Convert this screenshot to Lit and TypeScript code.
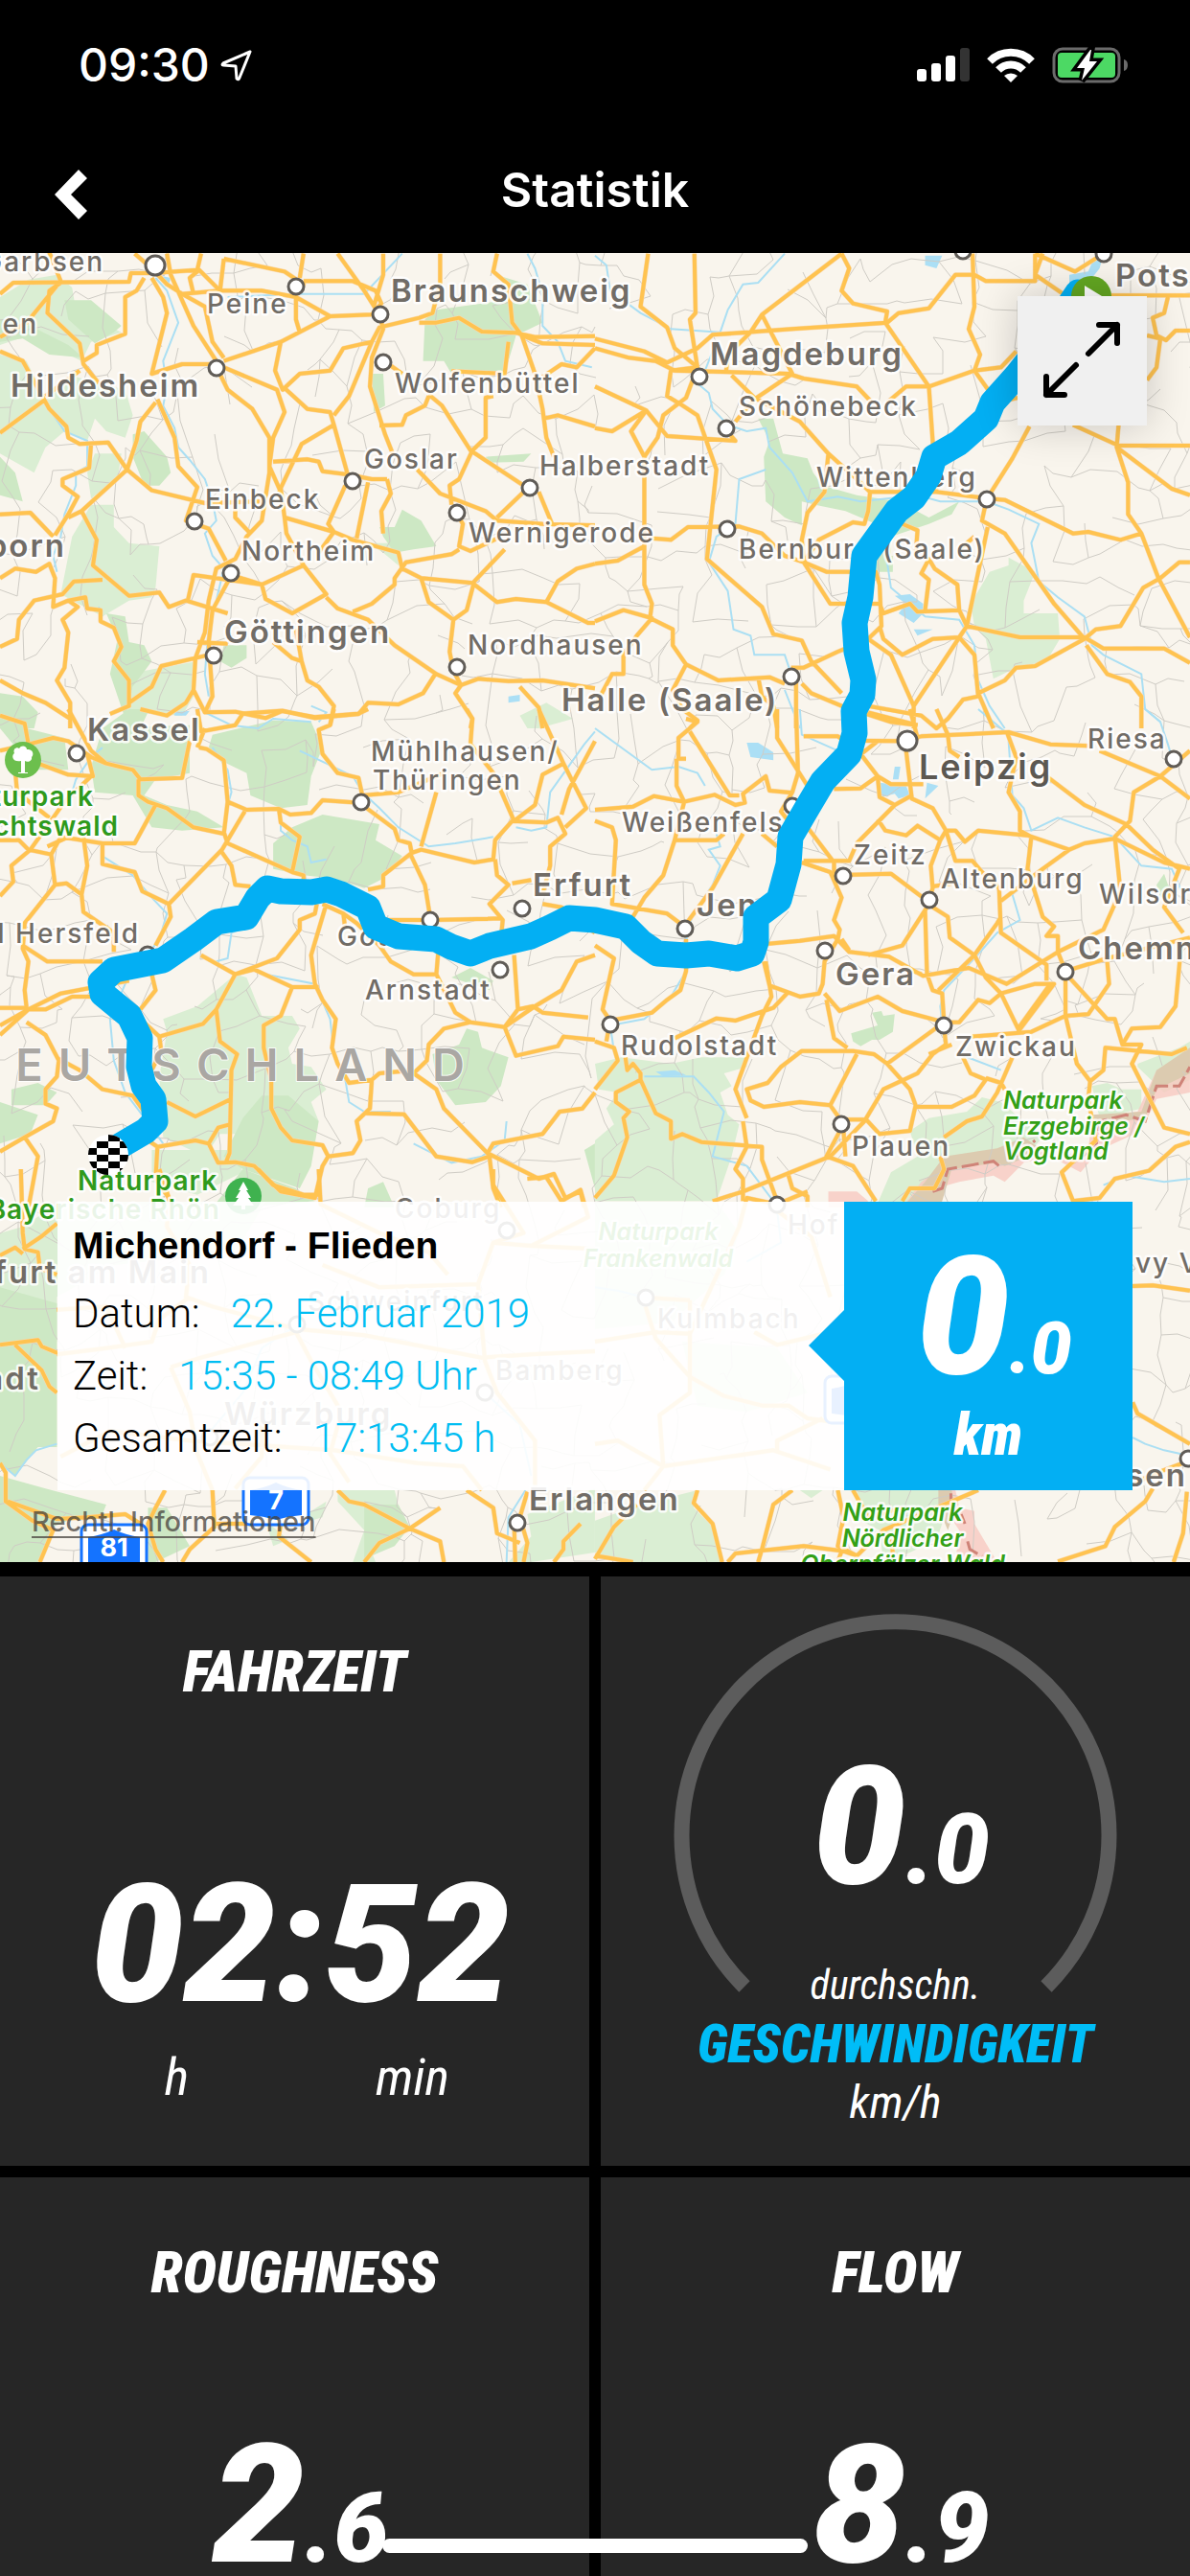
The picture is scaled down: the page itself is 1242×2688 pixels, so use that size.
import { LitElement, html, svg, css } from "lit";
import { customElement, property } from "lit/decorators.js";

type Kind = "town" | "city" | "metro" | "park" | "nature";
interface Label { t: string; x: number; y: number; k: Kind; end?: boolean; mid?: boolean }

/* The map is cut into six tiles, each with its own local grid. */
interface MapTile {
  x: number; y: number;
  light?: string; forest?: string; water?: string; river?: string; roads: string;
  pink?: string; tan?: string; border?: string;
  dots: [number, number, number?][];
}

const TILES: MapTile[] = [
  {
    x: 0, y: 260,
    light: "M75 95L150 80L190 120L200 190L320 260L240 290L215 350L180 330L100 260L0 300V150Z M0 330L70 350L120 470L200 400L330 440L350 520L330 590L280 570L250 530L230 600L170 570L120 620L90 700L0 640Z M250 640L320 640L310 720L240 780L230 700Z M240 800L300 800L300 870L340 920L420 930L410 1060L400 1090L340 1100L270 1150L160 1080L190 900Z M380 1320L520 1290L510 1400L480 1460L330 1450L350 1370Z M1370 1460L1440 1420L1510 1470L1420 1500H1390Z M970 920L1050 920L1050 990L1010 950Z",
    forest: "M170 160L240 160L320 240L300 260L250 295L180 220Z M0 220L80 240L180 300L220 340L130 330L60 280L0 290Z M350 580L380 570L440 650L450 700L420 740L380 740L350 650Z M0 650L40 700L60 790L0 770Z M1150 190L1330 160L1430 230L1360 270L1330 390L1190 390L1170 350L1115 350L1120 220Z M1060 815L1110 850L1150 930L1090 940L1040 950L1010 900L1000 870L1040 870Z M980 390L1010 390L1015 490L985 510Z M280 1140L330 1150L340 1230L380 1240L400 1290L350 1370L330 1470L290 1330L310 1220Z M590 1240L650 1240L650 1280L610 1310L580 1290Z M0 1390L60 1400L100 1450L90 1500H0Z M1320 85L1390 110L1430 230L1350 200Z M1280 650L1400 640L1380 665L1290 668Z",
    water: "M1340 1400L1370 1395L1370 1415L1340 1420Z M430 85L450 90L445 110L430 105Z",
    river: "M410 90L440 130L470 230L450 290L430 350L440 430L430 490L460 560L470 620L500 660L540 720L560 790L570 850L540 890L560 960L590 1000L570 1100L550 1180L540 1330L550 1400 M600 150L780 140L960 140L1060 14 M1390 14L1410 60L1430 140L1430 240L1470 290L1490 350L1560 370 M130 500L170 570L230 600L230 680L200 700L200 740L170 830L160 900L140 960L150 1010 M820 1430L860 1450L840 1480 M260 1120L270 1150",
    roads: "M0 140L35 105L340 102L345 75L400 75L520 65L530 14 M355 14L400 60L440 110L480 140L540 180L560 290L590 340 M400 90L430 150L440 200L400 390L480 360L570 360 M440 14L450 80L510 240L570 350 M130 10L160 100L70 230L0 275 M160 105L130 130L125 200L210 295L220 360L260 420 M380 90L360 130L330 150L330 265L255 300L255 325L220 350 M590 30L750 70L800 110L780 140L780 220L790 260 M590 30L580 130L480 140 M510 140L500 90L525 65L580 130L690 130L780 150L870 210L980 205L1005 170L990 130L930 100L800 100 M800 14L790 90 M890 14L960 130L1000 205L1010 250L980 340L975 430L1015 580L1035 640 M590 350L740 290L870 210 M1010 14L1010 80L985 180 M1160 14L1160 105L1140 200L1105 215L1000 245L980 290L905 310L870 380L790 390L745 440L725 380L740 290 M1105 230L1150 230L1210 215L1270 258L1360 262L1410 275L1568 272 M1310 14L1300 70L1340 110L1350 230L1375 270L1430 295L1568 300 M1375 270L1410 390L1430 500L1440 590L1460 650 M1340 290L1330 390L1190 382 M1430 400L1480 360L1520 370L1568 310 M1030 365L1060 390 M590 370L730 440L750 510L720 590L710 680L740 760 M575 380L600 440L665 500L710 590L710 700L690 850L650 900L620 970L570 1000L550 1100L540 1200L515 1280L510 1380L540 1450 M750 435L810 500L870 510L880 550L915 700 M880 550L795 610L735 760 M880 520L920 460L980 290 M1130 460L1120 490L1070 520L1060 550L1000 552 M1130 455L1165 490L1240 630L1380 740 M1300 460L1280 465V590L1245 630L1210 720L1185 740L1190 800 M1435 530L1470 520L1568 555 M0 320L60 350L130 500L175 555L180 590L210 610L285 605L335 690L400 755L540 795L690 790 M0 575L120 470 M210 380L120 460 M240 610L235 685L165 720L165 740L205 775L180 830L145 895 M410 480L370 540L360 600L335 690L215 820L180 840 M0 830L80 825L140 900 M215 820L255 910L245 990L340 1085L420 1075L445 1120L490 1100L600 1140 M415 470L460 590L470 680L520 745L490 850L550 875L595 975 M720 665L810 658L840 665L850 695L915 705L980 720L1020 720 M1020 720L1030 765L1005 820L1010 890 M970 730L940 905 M910 740L865 860L880 885L930 910L1050 950L1060 1000L1110 1030L1245 1045L1310 1105L1360 1095L1440 1105L1550 1170H1568 M740 750L750 840L880 885L840 950 M620 800V840L660 890 M1100 690L1160 765L1280 820L1310 850L1430 860L1568 865 M1380 760L1310 840 M1420 760L1455 860 M1205 830L1220 860L1210 930L1240 945L1320 900 M1210 940L1190 955L1070 980L1040 1030V1050L980 1110L930 1135 M750 840L755 890L800 990L690 1050L510 1020L495 1100 M800 990L860 1080L770 1140L700 1095L690 1050L610 1020 M860 1090L890 1125L970 1160L1040 1240L1150 1330L1215 1365 M0 1030L40 1000L95 1010L130 985L145 1030L140 1120L180 1100L205 1120L165 1160L180 1200L170 1310L150 1350L185 1420L185 1500 M0 1245L45 1220L50 1160L90 1100L165 1080L195 1040L270 1035 M180 1100L225 1090L230 1125L265 1130L265 1165L300 1185L320 1245L300 1290L340 1350V1430L290 1455 M340 1420L400 1370L425 1305L550 1270 M520 1230L600 1235 M610 1020L560 1130L550 1230L560 1400L540 1450L620 1448L700 1468L745 1445L830 1468L945 1455L970 1420L1050 1425L1115 1390L1150 1325 M780 1190L795 1290L810 1350L840 1370L880 1430L870 1490 M720 1230L770 1280L795 1290 M1330 940L1250 1040L1230 1130L1195 1160L1185 1260L1195 1320L1215 1365L1260 1345L1340 1352L1430 1350L1568 1375 M1110 1030L1130 1105L1195 1160 M1440 1105L1470 1040L1520 1000L1568 985 M1215 1365L1200 1390L1245 1470L1240 1500 M1370 1370L1420 1435L1430 1500 M0 1350L60 1390L120 1420L185 1470 M510 1380L490 1420L440 1460L370 1440",
    dots: [[410, 50, 10], [780, 117], [1002, 205], [1010, 354], [570, 372], [929, 727], [1396, 747], [512, 853], [1204, 825], [608, 1014], [562, 1273], [1204, 1308]],
  },
  {
    x: 621, y: 260,
    light: "M1090 965L1160 1010L1130 1100L1070 1075L1130 1100L1130 1140L1220 1140L1225 1220L1190 1290L1110 1310L1050 1345L1030 1220L1000 1180L990 1110L1040 1010L1090 990Z",
    forest: "M430 530L470 530L495 640L560 655L575 700L600 740L690 770L800 790L880 840L960 790L940 830L880 860L780 900L780 1000L740 1010L740 860L660 820L580 800L545 790L545 865L500 840L450 790L445 650L460 600Z M740 960L785 960L785 1010L745 1010Z",
    water: "M870 20L915 20L900 60L870 50Z M790 1085L830 1080L865 1110V1140L840 1170L800 1140L820 1110Z M840 1190L890 1190L850 1210Z M1250 80L1300 70L1320 14H1340L1330 60L1290 120L1250 130Z",
    river: "M0 20L30 50L40 130L120 200L200 250L330 260L350 190L390 110L430 105L500 14 M320 290L290 380L270 420L300 450L310 500L350 550L400 570L450 560L460 620L520 700L560 790L640 775L700 790L850 770L910 790L1032 790L1090 815L1170 860L1150 920L1170 1040L1220 1090L1290 1150L1310 1240L1340 1270L1440 1330L1450 1440L1490 1480 M450 690L380 720L370 860L320 900L300 980L350 1070L365 1190L410 1210L420 1270L500 1270L517 1330 M770 980L780 1060L870 1150L960 1160L1000 1240L1010 1350L1040 1430L1080 1500 M500 1380L540 1500",
    roads: "M140 14L120 180L190 245L210 310L270 370 M262 14L265 200L250 220L270 370L200 380L190 460L225 485L270 520L320 690L295 970L440 1120L470 1205L545 1225L570 1290L650 1390 M0 280L130 320L190 355L270 310L310 268L520 250L770 230L800 200L880 185L950 80L1000 80L1030 100L1160 100L1160 14 M0 310L90 340L160 350L210 380L510 390L550 405L690 430L730 480 M650 14L440 205L410 260L350 330L345 390 M650 14L670 60L650 130L680 170L770 195L765 230L880 430L890 600L900 760 M440 205L520 390L420 470L370 540 M360 395L420 465L540 540L615 640L690 720L725 760L900 760L1032 780L1080 785L1260 890L1300 885L1385 910L1440 890 M0 430L135 505L95 570L130 650L165 590L180 520L240 465L270 370 M0 560L45 570L135 505L190 585L370 600L345 565 M130 650V740V1050L150 1110L145 1155L205 1190V1240L240 1300L325 1350L460 1340L500 1360 M150 905L200 910L245 870L380 868L440 890L500 960L550 980L590 910L680 855L710 860L720 820L725 760 M615 640L605 760L560 825L545 910L550 980L620 1110L750 1110L760 1140L830 1110L850 1135L960 1130 M550 980L610 1010L700 1010L740 1010L750 1050L755 1180L720 1220 M0 985L60 975L130 930 M0 1165L75 1130L150 1155L110 1210L75 1270L75 1330L45 1330L0 1430 M995 14L1000 180L985 250L1015 330L1000 380L880 430L820 430L770 480 M1000 380L1070 370L1110 320 M1000 380L1060 480L1114 465 M1160 14L1265 70L1340 14 M1360 145H1568 M1180 14L1160 80L1240 145 M1455 270L1490 280L1480 370L1455 410 M1510 150L1500 200L1470 215L1480 270L1505 285L1530 255H1568 M1145 555L1100 655L1032 783L1020 850L1080 890L1210 1110L1290 1220L1320 1190L1385 1180L1445 1060L1490 1030L1540 980H1568 M1380 550L1375 620L1405 730V830L1440 890L1485 1030L1568 1215 M1260 550L1380 615H1568 M1375 620L1520 750L1568 770 M1035 870L980 1180L840 1430L780 1270L720 1220L640 1260L550 1310H517 M980 1180L1120 1215H1290L1340 1250H1500L1568 1295 M960 1130L955 1050L895 1000L880 970L860 1015L880 1035L870 1130 M800 855L850 880L845 960 M1000 900L960 940 M960 1130L980 1180L960 1215L890 1220L810 1270L760 1220L750 1180 M960 1215L1000 1270L1010 1400L970 1410L930 1470L900 1500L860 1460L720 1430 M840 1430V1500 M1290 1220L1160 1305L1110 1310L1080 1350L1010 1390L1050 1500 M1295 1240L1350 1330L1410 1355L1440 1400V1500 M530 1345V1500 M545 1360L570 1390L650 1430L780 1480L850 1490 M240 1300L205 1380L230 1440L270 1475L250 1500 M430 1340L440 1400L470 1430L480 1500",
    dots: [[275, 399], [345, 561], [1032, 783], [348, 876], [517, 1338], [1340, 14], [970, 6]],
  },
  {
    x: 0, y: 740,
    light: "M620 830L650 840L690 960L770 960L790 1000L760 1060L770 1110L820 1120L860 1190L820 1230L840 1290L780 1280L700 1210L640 1330L580 1330L540 1400L430 1340L420 1150L440 1010L430 970L520 930Z M300 70L480 60L480 120L400 160L320 130Z M400 1380L620 1380L640 1450L520 1520L400 1480Z",
    forest: "M0 20L70 60L170 90L180 190L90 190L0 60Z M270 60L500 50L500 200L410 220L380 270L440 300L520 320L590 370L480 380L400 370L350 270L250 260L240 180Z M560 80L720 35L820 40L850 120L820 210L810 300L740 310L660 270L650 200L580 160L550 120Z M850 330L1000 360L990 410L1060 460L1010 530L960 560L880 530L800 520L720 500L720 420L770 370Z M340 0H390V10L370 60L290 90L270 60Z M690 1210L760 1210L840 1290L820 1430L790 1500L640 1440L590 1400L640 1280Z M0 1230L100 1270L80 1330L0 1360Z M30 1190L100 1170L150 1200L120 1240L30 1240Z M1270 1060L1340 1090L1320 1180L1280 1230L1200 1240L1150 1160L1140 1080L1210 1050L1230 1000L1260 1010Z M1240 810L1300 850L1290 880L1190 840Z M970 1500L1010 1480L1040 1560H960Z M1540 1380L1568 1360V1500Z M640 1440L780 1500L830 1540L640 1560H560Z",
    water: "M460 10L500 5L490 20L460 20Z",
    river: "M190 260L200 220L240 150L270 120 M540 10L610 50L680 60L720 30L820 40 M560 120L600 190L610 260L600 300 M790 130L860 170L930 210L955 260L1000 310L1050 370L1130 430L1200 420L1300 400 M1568 70L1540 110L1450 260L1440 370L1400 380L1360 370 M740 310L740 380L770 410L810 430L820 480L860 470 M270 460L350 520L400 590L440 640L420 720L330 860L290 970L300 1100L330 1200L400 1310L430 1360 M650 680L610 700L600 780L570 790 M700 830L830 860L870 970L880 1070L910 1160L920 1230L960 1260L1030 1260 M1090 1360L1190 1420L1270 1400L1330 1350L1335 1290",
    roads: "M0 20L65 45L75 110 M180 0L240 130L280 170L350 190L370 220L480 215L500 100 M0 130L75 110L140 90L180 100L240 150L280 170 M100 170L180 205L245 210L230 140 M240 210L170 290L140 340L80 440L30 490L35 540L0 585 M40 190L45 260L130 340 M520 0L530 70L620 50L640 14L740 5L830 25L945 14L970 0 M525 120L545 125L590 160L600 290L650 315L735 312L765 330L820 325L850 285L930 292 M540 60L520 120 M880 0L870 50L840 65L850 140L890 200L945 215L955 270L1050 260L1170 200 M600 290L590 390L510 370L440 310L390 290L365 270L365 220 M410 300L355 420H270V485L355 510L375 570L445 610L585 440L645 320 M0 410H50L75 440L135 455L160 400L270 420 M135 455L145 550L65 670L60 750L75 790L65 880L70 935H0 M145 550L175 545L215 580L220 635L300 700L300 760 M220 400L230 490L215 580 M125 430L180 400 M60 740L125 790H270 M445 610L450 650L410 740 M590 385L600 420L770 510L800 520V540 M735 312L740 355L790 400L770 510 M580 440L610 490L620 550L660 555 M955 300L1040 375L1050 410L1080 420L1085 450L1010 520V555L970 565 M1085 450L1110 440L1250 480L1300 470L1305 410L1350 350L1440 355L1470 340L1490 390L1450 430V490L1430 580 M1080 450L1120 550L1135 660 M1150 260L1110 430 M1230 0L1245 30L1240 110L1300 200L1355 350L1410 300L1430 205L1485 170L1420 0 M1485 170L1545 310L1490 370 M1568 100L1500 250L1480 330 M1305 470L1310 520L1340 550L1290 610L1325 660L1320 720 M1350 545L1400 535 M1010 660H1140L1320 655 M905 640L940 670L1000 740L1030 790L1090 830L1150 830L1155 760 M850 610L905 640L910 690 M860 610L820 770L830 860L850 910L885 970L875 1060L890 1110L920 1170L980 1160L1000 1140L1090 1130 M835 610L830 640L790 660V690L730 780L620 830L570 940L535 985L420 1025L370 970 M400 830L410 880L370 940 M530 770L620 830L670 815L770 870L840 870 M770 870L740 960L695 990V1060L715 1160V1250L740 1310L770 1350L850 1365L865 1400L930 1390L950 1350L940 1290L975 1250L980 1160 M570 940L580 1040L625 1080L610 1130L605 1390L595 1420 M420 1025L425 1070L400 1130 M440 1230L515 1275L610 1220 M0 1020L75 940H120L190 900L280 900 M0 990L75 940L160 890L340 850 M70 980L120 1020L155 1100L150 1150L120 1190V1235L150 1250L140 1290L65 1340L0 1385 M155 1095L210 1130L270 1190L350 1210L380 1260 M65 1340L100 1400L75 1560 M390 1350L415 1370L410 1470L445 1530 M415 1370L515 1350L550 1360L575 1310L605 1300 M550 1360L575 1420L620 1418L670 1430L740 1510L830 1530L850 1430L865 1400 M1150 830L1200 950L1240 980L1330 995L1360 1085L1470 1055L1485 1025L1568 1035 M1240 980L1170 1000L1130 1050L1125 1100L1090 1140L1150 1190L1170 1250L1285 1390L1300 1360L1430 1330L1475 1260L1535 1250L1568 1200 M1355 770L1365 940L1330 995L1410 930L1480 880L1520 790L1568 770 M1365 940L1405 930L1430 950L1550 965 M965 1265L1065 1268L1150 1400L1245 1418L1290 1400L1300 1500L1320 1560 M1285 1390L1420 1470L1460 1455L1490 1530L1530 1510L1540 1560 M1430 610L1480 620L1568 700",
    dots: [[202, 138], [951, 291], [1376, 624], [1133, 660], [1318, 816], [390, 768]],
  },
  {
    x: 621, y: 740,
    light: "M0 1110L70 1090L200 1110L280 1090L400 1090L400 1120L340 1140L360 1180L330 1200L350 1270L380 1300L360 1400L340 1470L320 1540H0V1350L50 1300L30 1250L60 1200L10 1190Z M1020 1215L1070 1230L1180 1340L1150 1380L1060 1380L930 1420L870 1500L810 1560H740L780 1450L850 1400L830 1320L880 1280L980 1260Z M1430 1110L1540 1060L1568 1040V1160L1500 1200L1430 1120Z M1310 1180L1350 1170L1390 1190L1440 1190L1440 1250L1330 1280Z",
    forest: "M730 950L755 945L760 960L790 955L785 1010L750 1035L730 1035L700 1055L680 1040L675 1015L745 990Z M1480 550L1500 515L1510 550L1530 570L1490 590Z",
    water: "M400 105L430 105L470 135L470 160L410 150Z M790 180H805L800 220H785Z M750 230L820 240L830 270L800 280L790 265L755 275Z M875 230L905 240L870 280Z M160 1135L210 1130L240 1145L180 1150Z",
    pink: "M615 1510L690 1510L720 1540L700 1560H615Z M900 1500L960 1480L1050 1460L1080 1480L1130 1420L1200 1400L1280 1450L1330 1380L1440 1320L1480 1220L1568 1200V1060L1540 1110L1480 1130L1430 1260L1310 1280L1300 1380L1220 1400L1130 1350L1060 1400L930 1420L860 1480L810 1560H920Z",
    tan: "M920 1400L1060 1375L1130 1340L1180 1380L1080 1430L1060 1420L940 1440L910 1560H810L870 1480Z M1310 1270L1440 1260L1480 1130L1568 1060V1140L1480 1190L1450 1280L1320 1300Z",
    border: "M890 1510L915 1500L930 1440L1050 1415L1070 1435 M1110 1400L1160 1350 M1260 1420L1320 1370L1330 1290L1400 1270L1450 1290L1480 1180L1540 1180L1568 1120",
    river: "M540 0L545 80L640 130 M0 60L150 190L220 180L270 200L290 240 M1010 0L1080 70 M1450 0L1490 40L1510 110L1520 150 M1090 100L1100 270L1130 310L1150 380L1220 340L1290 370L1370 400L1440 490L1520 500L1550 580 M1150 420L1140 540L1100 580L1120 660L1060 700L1000 780L920 880L910 930L920 1040 M320 390L330 430L300 440L330 490L310 550L260 640L240 700L250 800L200 900L130 970L40 990L50 1070 M130 1150L260 1150L300 1200L340 1260L310 1400L400 1430L470 1540 M960 1080L1070 1130 M1568 1470L1500 1480L1400 1460L1340 1490",
    roads: "M0 315L100 305L155 272L235 290L315 268L370 300L395 293L390 265L450 210L460 255L520 262 M250 70L355 270H380 M240 30L270 40L220 90V155H240 M215 155V240L235 290L210 410L180 520L130 590L100 650 M0 350L45 370L55 410L45 610L190 640L235 680L310 560L390 390 M210 410L320 410L340 390 M440 390L480 430 M480 0V90L560 240 M530 0L535 200L520 260L490 320L510 350 M550 85H640L655 98L800 100L860 85L1090 72L1200 110L1300 115 M720 10L850 50 M830 0L850 90L820 130L835 280L890 310L925 380L910 410L885 490L890 560L880 600 M900 0L930 80L935 130L960 150 M1330 130L1490 210L1568 280 M1568 130L1490 210L1420 260L1410 350L1370 400L1385 570L1340 690L1220 760L1085 860L985 810L865 835L775 775L670 760L630 710L540 725L450 735 M745 100L680 160 M700 140L745 210L750 275L790 300L835 270 M630 250L700 248L745 210L780 235H865 M790 300L690 420L670 475H550 M560 370L630 480V520L780 515L870 595 M745 345L765 380L820 395L850 365L910 410 M925 380H950L975 415L1010 380L1140 395L1250 440L1290 420L1370 405L1500 480L1568 500 M925 380L950 475L995 475L1020 510L1065 560L1070 700L1190 800L1190 850 M1085 70L1110 150L1090 260L1120 320V380L1150 400L1140 500L1180 650L1210 680L1190 710H1220L1220 760 M1190 210L1290 300L1400 360L1470 440L1540 500L1500 620L1550 700 M1250 440L1180 500L1070 600 M890 555L940 545 M545 480L620 510L650 590L630 660L645 690L640 720L605 790L600 860L590 890L540 900L460 865L445 790 M650 720L670 755 M875 620L810 740L720 770 M870 630L875 830L890 880L915 890L920 980 M890 620L930 650L935 715L1000 770L1030 840L1070 890L1115 1000L1200 860 M1070 650L1060 670L1000 770L905 880 M1070 890L1040 920L1010 910L960 980H920 M1070 890L1160 860L1210 860L1115 1010 M860 830L840 820 M1220 760L1240 820L1350 780L1568 715 M1240 830V960L1270 1110L1305 1165L1300 1220L1320 1350L1230 1450L1260 1540L1330 1530L1370 1470L1460 1445L1530 1370L1568 1355 M1250 840L1350 970H1370L1390 1050L1415 1000L1490 995L1530 930L1545 740 M1350 790L1355 860L1300 955L1240 960L1150 1010L990 1025 M1390 1050H1440L1415 1110L1500 1310L1568 1330 M1305 1165L1340 1130L1345 1060L1520 1080L1560 1060 M240 720V820L225 880L190 910L150 950L40 975L30 1040 M0 740L50 780L20 940L40 975 M450 790L465 900L440 960L370 1190L400 1280 M210 1030L320 968L370 975L470 935L510 885 M605 890L645 945L745 900L810 945L920 980L770 1110L735 1080L680 1070L545 1070L490 1120L455 1170L400 1190L410 1225L445 1245L540 1230L620 1240L690 1080 M610 910L630 1030L665 1060 M770 1110L830 1190L845 1240L830 1320L750 1330L715 1285H655 M920 1000L925 1050L890 1080L850 1140L760 1190L710 1290L620 1400L390 1510L310 1540 M940 1050L880 1080 M970 1090L990 1140L1030 1160L1000 1210L940 1245H845 M1100 1090L1060 1200L1020 1275L980 1290L920 1340 M1030 1155L1070 1170L1080 1190 M0 1190L60 1100L50 1060L0 1040 M80 1090L85 1130L100 1110L120 1140V1160L55 1200V1230L90 1260L75 1280L85 1340L50 1460L0 1530 M120 1160L160 1265L200 1290V1345L230 1330L280 1355L440 1370V1410L480 1540 M390 1290L400 1370L370 1440L390 1470V1540 M650 1310L610 1400L680 1430L740 1540 M655 1320L660 1400 M910 1400L920 1440L895 1500L830 1500L810 1540 M620 1240L650 1290 M510 1460L520 1500L560 1525V1560",
    dots: [[824, 100, 10], [1524, 156], [520, 303], [653, 522], [881, 597], [237, 687], [605, 756], [1241, 822], [40, 987], [918, 990], [648, 1299], [480, 1550]],
  },
  {
    x: 0, y: 1220,
    light: "M890 1005H1040L1060 1100L980 1200L990 1230H930L960 1130L890 1040Z M1390 1080L1568 1000V1200L1400 1230H1340L1400 1150Z M780 1100L860 1040L850 1090L790 1110Z M700 1100L760 1160L720 1180Z M0 200L60 180L150 110L150 540L0 540Z M150 102H700L620 260L300 300L150 400Z",
    forest: "M0 370L150 420V870L100 870L60 930L40 960L0 920Z M0 960L120 1000L280 1050L270 1080L200 1090L140 1120L100 1230H0Z M390 1060L440 1060L500 1180L410 1230H390Z M960 1050L1050 1050L1080 1120L1040 1180L960 1220Z",
    river: "M0 920L40 960L70 910L95 880L150 860 M1385 1005L1340 1090L1335 1230 M780 490L690 560L640 700L540 840 M1278 700L1370 800L1400 960",
    roads: "M0 550L100 535L110 555L150 575 M40 550L110 630L130 680L150 700 M0 920L15 950V1040L85 1100L140 1130L105 1230 M20 1040L150 1095L230 1090L330 1080L370 1110 M435 1005L410 1060L390 1110L410 1190L430 1230 M560 1005L565 1120L500 1190L480 1230 M680 1110L570 1110 M740 1110L735 1150L820 1230 M890 1005L920 1040L960 1050L1080 1125L1160 1165L1170 1230 M1230 1005L1300 1060L1310 1140L1370 1170 M1160 1060L1080 1125L1000 1170L960 1230 M1355 1110L1358 1230 M1375 1110L1390 1170L1380 1230 M1530 1110L1485 1165V1190L1460 1230 M1390 1010L1370 1090 M60 265L40 245L0 270 M55 0L60 200L65 250L100 260L105 310L150 330 M60 250L110 210L150 170 M420 0L445 90L440 180L500 300L490 400L560 430L780 500L960 520L1270 590L1400 580L1568 570 M150 580L280 560L400 540L420 470L500 400 M450 620L530 590L780 510L820 600L900 760L870 890L920 980 M450 620L500 760L520 890L560 1005 M690 780V900L620 1000 M850 300L1000 370L1260 360L1300 230L1400 240L1568 250 M1260 360L1278 600L1310 700L1410 850V1000 M160 900L290 820L500 850L880 880L1100 920L1220 930L1270 1005 M840 0L845 110L1000 200L1130 260L1180 330 M680 0L720 50L800 80L845 80 M1300 0V50L1380 200L1300 230 M1390 30L1440 25L1480 100L1530 65L1550 150L1400 240 M150 440L280 430L330 560",
    dots: [[1336, 192], [782, 485], [1278, 700], [553, 840], [1363, 1107]],
  },
  {
    x: 621, y: 1220,
    light: "M0 102H320L380 200L340 330L200 480L0 500Z M0 1100L120 1050L270 1005L260 1060L310 1120L330 1230H60L0 1200Z M690 1005H910L930 1060L900 1160L830 1200L760 1230L750 1130L700 1100Z M230 540L480 560L560 700L400 760L270 740Z M540 1005H600L570 1030Z",
    pink: "M905 1005H950L960 1060L1000 1070V1110L1040 1190L1060 1230H950L960 1130L920 1060Z",
    tan: "M905 1005H940L950 1060L930 1130L905 1060Z",
    border: "M938 1015V1040 M965 1080L975 1110 M982 1165L988 1190L1020 1212",
    river: "M1417 840L1450 860L1500 880L1540 890L1568 900 M133 402L60 380L0 370 M480 130L490 230L400 290",
    roads: "M0 540L160 510L250 515L380 180L400 90L480 110L560 70 M270 1005L260 1045L310 1110L335 1230 M520 1005L470 1050L440 1190L430 1230 M0 1220L50 1120L110 1050 M350 1230L370 1203L550 1180L650 1195L640 1230 M640 1005L655 1090L640 1180L690 1210 M640 1190L690 1210L760 1130L1010 1005 M680 1005L720 1090L810 1060 M780 1160L785 1200 M1417 366L1470 364L1568 380 M1417 730L1430 765L1568 860 M1550 920L1460 960L1417 990 M1470 1000L1450 1040L1370 1120L1345 1180L1220 1228 M1560 1010L1550 1140L1525 1230 M0 1210L100 1230 M250 410V700L170 770L180 930L130 1005 M250 650L340 710L440 740L510 740L560 780L620 790 M180 930L470 880L620 940 M180 930L60 850L0 860 M133 430L160 530L250 650 M420 510L480 550L620 510 M480 130L570 210L620 400 M133 402L250 410 M480 880V850L600 780",
    dots: [[133, 402], [1563, 905]],
  },
];

const LABELS: Label[] = [
  { t: "Garbsen", x: 109, y: 283, k: "town", end: true },
  { t: "Peine", x: 216, y: 327, k: "town" },
  { t: "Braunschweig", x: 408, y: 315, k: "city" },
  { t: "en", x: 40, y: 348, k: "town", end: true },
  { t: "Hildesheim", x: 11, y: 414, k: "city" },
  { t: "Wolfenbüttel", x: 412, y: 410, k: "town" },
  { t: "Goslar", x: 380, y: 489, k: "town" },
  { t: "Halberstadt", x: 563, y: 496, k: "town" },
  { t: "Einbeck", x: 214, y: 531, k: "town" },
  { t: "Northeim", x: 252, y: 585, k: "town" },
  { t: "Wernigerode", x: 489, y: 566, k: "town" },
  { t: "Paderborn", x: 69, y: 581, k: "city", end: true },
  { t: "Göttingen", x: 234, y: 671, k: "city" },
  { t: "Nordhausen", x: 488, y: 683, k: "town" },
  { t: "Halle (Saale)", x: 586, y: 742, k: "city" },
  { t: "Magdeburg", x: 741, y: 381, k: "city" },
  { t: "Schönebeck", x: 771, y: 434, k: "town" },
  { t: "Wittenberg", x: 852, y: 508, k: "town" },
  { t: "Bernburg (Saale)", x: 771, y: 583, k: "town" },
  { t: "Potsdam", x: 1164, y: 299, k: "city" },
  { t: "Kassel", x: 91, y: 773, k: "city" },
  { t: "Mühlhausen/", x: 387, y: 794, k: "town" },
  { t: "Thüringen", x: 389, y: 824, k: "town" },
  { t: "Erfurt", x: 556, y: 935, k: "city" },
  { t: "Bad Hersfeld", x: 146, y: 984, k: "town", end: true },
  { t: "Gotha", x: 352, y: 987, k: "town" },
  { t: "Arnstadt", x: 381, y: 1043, k: "town" },
  { t: "Leipzig", x: 959, y: 813, k: "metro" },
  { t: "Riesa", x: 1135, y: 781, k: "town" },
  { t: "Weißenfels", x: 649, y: 868, k: "town" },
  { t: "Zeitz", x: 891, y: 902, k: "town" },
  { t: "Altenburg", x: 982, y: 927, k: "town" },
  { t: "Wilsdruff", x: 1147, y: 943, k: "town" },
  { t: "Jena", x: 727, y: 956, k: "city" },
  { t: "Gera", x: 872, y: 1028, k: "city" },
  { t: "Chemnitz", x: 1125, y: 1001, k: "city" },
  { t: "Rudolstadt", x: 648, y: 1101, k: "town" },
  { t: "Zwickau", x: 997, y: 1102, k: "town" },
  { t: "Plauen", x: 889, y: 1206, k: "town" },
  { t: "Coburg", x: 412, y: 1271, k: "town" },
  { t: "Frankfurt am Main", x: 220, y: 1339, k: "city", end: true },
  { t: "Schweinfurt", x: 321, y: 1368, k: "town" },
  { t: "Bamberg", x: 517, y: 1440, k: "town" },
  { t: "Darmstadt", x: 42, y: 1450, k: "city", end: true },
  { t: "Würzburg", x: 234, y: 1487, k: "city" },
  { t: "Erlangen", x: 552, y: 1576, k: "city" },
  { t: "Hof", x: 822, y: 1288, k: "town" },
  { t: "Kulmbach", x: 686, y: 1386, k: "town" },
  { t: "vy Vary", x: 1185, y: 1328, k: "town" },
  { t: "Pilsen", x: 1239, y: 1551, k: "city", end: true },
  { t: "Naturpark", x: 98, y: 841, k: "park", end: true },
  { t: "Habichtswald", x: 124, y: 872, k: "park", end: true },
  { t: "Naturpark", x: 81, y: 1242, k: "park" },
  { t: "Bayerische Rhön", x: 230, y: 1272, k: "park", end: true },
  { t: "Naturpark", x: 1047, y: 1157, k: "nature" },
  { t: "Erzgebirge /", x: 1047, y: 1184, k: "nature" },
  { t: "Vogtland", x: 1047, y: 1210, k: "nature" },
  { t: "Naturpark", x: 687, y: 1294, k: "nature", mid: true },
  { t: "Frankenwald", x: 687, y: 1322, k: "nature", mid: true },
  { t: "Naturpark", x: 942, y: 1587, k: "nature", mid: true },
  { t: "Nördlicher", x: 942, y: 1614, k: "nature", mid: true },
  { t: "Oberpfälzer Wald", x: 942, y: 1641, k: "nature", mid: true },
];

const ROUTE =
  "M1139 309L1125 305L1098 345L1061 392L1036 420L1029 437L1001 462L975 477L969 497L954 519L936 533L920 555L902 580L898 623L892 650L894 680L901 709L900 725L891 742L892 765L886 787L859 815L843 842L825 873L823 902L813 939L789 957L789 983L785 995L769 1000L740 995L716 997L686 995L669 983L653 967L621 960L594 958L574 968L554 977L511 987L491 995L471 988L455 980L416 977L392 967L384 947L356 933L341 928L325 931L293 930L279 927L269 937L257 957L226 962L202 980L170 1002L119 1012L105 1025L107 1037L135 1060L146 1083L145 1113L150 1133L160 1147L162 1170L152 1180L123 1197L113 1205";

/* Side roads: a jittered lattice with a fixed seed, so it is the same on every render. */
function sideRoads(): string {
  let seed = 41;
  const rnd = () => ((seed = (seed * 1103515245 + 12345) % 2147483648) / 2147483648);
  const step = 36;
  const cols = 37;
  const rows = 40;
  const pts: [number, number][][] = [];
  for (let r = 0; r < rows; r++) {
    pts.push([]);
    for (let c = 0; c < cols; c++) {
      pts[r].push([Math.round((c - 0.5 + (rnd() - 0.5) * 0.9) * step), Math.round(264 + (r - 0.5 + (rnd() - 0.5) * 0.9) * step)]);
    }
  }
  const line = (a: [number, number], b: [number, number]) => {
    const mx = Math.round((a[0] + b[0]) / 2 + (rnd() - 0.5) * 14);
    const my = Math.round((a[1] + b[1]) / 2 + (rnd() - 0.5) * 14);
    return `M${a[0]} ${a[1]}L${mx} ${my}L${b[0]} ${b[1]}`;
  };
  let d = "";
  for (let r = 0; r < rows; r++) {
    for (let c = 0; c < cols; c++) {
      if (c + 1 < cols && rnd() < 0.55) d += line(pts[r][c], pts[r][c + 1]);
      if (r + 1 < rows && rnd() < 0.55) d += line(pts[r][c], pts[r + 1][c]);
    }
  }
  return d;
}
const SIDE_ROADS = sideRoads();

const place = (t: MapTile) => `translate(${t.x} ${t.y}) scale(0.396 0.33333)`;

@customElement("route-map")
class RouteMap extends LitElement {
  static styles = css`
    :host { display: block; }
    .map { display: block; width: 100%; height: auto; background: #f9f5ed; }
    path { vector-effect: non-scaling-stroke; }
    .light { fill: #daeed3; }
    .forest { fill: #cde8c4; }
    .water { fill: #abdff5; }
    .river { fill: none; stroke: #abdff3; stroke-width: 2px; }
    .side { fill: none; stroke: #cfccc5; stroke-width: 1px; }
    .case { fill: none; stroke: #f9d9b0; stroke-width: 5px; stroke-linejoin: round; }
    .road { fill: none; stroke: #ffc350; stroke-width: 4px; stroke-linejoin: round; }
    .pink { fill: #f7c9c0; opacity: 0.8; }
    .tan { fill: #dccbb0; }
    .border { fill: none; stroke: #cf8378; stroke-width: 3px; stroke-dasharray: 18 5; }
    .dot { fill: #fff; stroke: #605c57; stroke-width: 3px; }
    text { font-family: Inter, "Liberation Sans", sans-serif; paint-order: stroke; stroke: rgba(255, 255, 255, 0.85); stroke-width: 5px; stroke-linejoin: round; fill: #716c66; letter-spacing: 2px; }
    .town { font-size: 28px; font-weight: 500; }
    .city { font-size: 33px; font-weight: 600; }
    .metro { font-size: 36px; font-weight: 600; fill: #5c5852; }
    .park { font-size: 28px; font-weight: 600; fill: #2f9a1c; letter-spacing: 1px; }
    .nature { font-size: 25px; font-weight: 600; font-style: italic; fill: #33a016; letter-spacing: 0; }
    .country { font-size: 47px; font-weight: 600; fill: #aaa7a3; stroke-width: 2px; letter-spacing: 16px; }
    .end { text-anchor: end; }
    .mid { text-anchor: middle; }
    .route { fill: none; stroke: #03aff3; stroke-width: 27px; stroke-linejoin: round; stroke-linecap: round; }
    .shield text { font-size: 27px; font-weight: 700; fill: #fff; stroke: none; text-anchor: middle; letter-spacing: 0; }
  `;

  private shield(x: number, y: number, n: string) {
    return svg`<g class="shield" transform=${`translate(${x} ${y})`}>
      <rect x="1" y="1" width="68" height="49" rx="7" fill="#fff" stroke="#1473ff" stroke-width="3"></rect>
      <path d="M8 14Q22 12 35 6Q48 12 62 14V40Q48 41 35 45Q22 41 8 40Z" fill="#1473ff"></path>
      <text x="35" y="34">${n}</text>
    </g>`;
  }

  render() {
    return html`<svg class="map" viewBox="0 264 1242 1366" role="img" aria-label="Karte">
      ${TILES.map((t) => svg`<g transform=${place(t)}>
        <path class="light" d=${t.light ?? ""}></path>
        <path class="forest" d=${t.forest ?? ""}></path>
        <path class="pink" d=${t.pink ?? ""}></path>
        <path class="tan" d=${t.tan ?? ""}></path>
        <path class="water" d=${t.water ?? ""}></path>
      </g>`)}
      <path class="side" d=${SIDE_ROADS}></path>
      ${TILES.map((t) => svg`<g transform=${place(t)}>
        <path class="river" d=${t.river ?? ""}></path>
        <path class="border" d=${t.border ?? ""}></path>
        <path class="case" d=${t.roads}></path>
      </g>`)}
      ${TILES.map((t) => svg`<g transform=${place(t)}><path class="road" d=${t.roads}></path></g>`)}
      ${TILES.map((t) => t.dots.map((d) => svg`<circle class="dot" cx=${Math.round(t.x + d[0] * 0.396)} cy=${Math.round(t.y + d[1] / 3)} r=${d[2] ?? 8}></circle>`))}
      <text class="country end" x="501" y="1128">DEUTSCHLAND</text>
      ${LABELS.map((l) => svg`<text class=${`${l.k}${l.end ? " end" : ""}${l.mid ? " mid" : ""}`} x=${l.x} y=${l.y}>${l.t}</text>`)}
      <circle cx="24" cy="793" r="19" fill="#6cbf4d"></circle>
      <path d="M22 806V794C14 796 11 789 15 786C13 781 18 779 20 781C22 777 28 778 28 782C34 781 36 787 33 790C34 794 29 796 26 794V806H29V807H19V806Z" fill="#fff"></path>
      <circle cx="254" cy="1248" r="19" fill="#3fb24f"></circle>
      <path d="M254 1233L259 1242H257L262 1250H259L265 1258H256V1262H252V1258H243L249 1250H246L251 1242H249Z" fill="#fff"></path>
      ${this.shield(253, 1541, "7")}
      ${this.shield(84, 1590, "81")}
      ${this.shield(860, 1435, "9")}
      <path class="route" d=${ROUTE}></path>
      <circle cx="1139" cy="309" r="21" fill="#63a722"></circle>
      <path d="M1132 298L1150 309L1132 320Z" fill="#fff"></path>
      <clipPath id="flag"><circle cx="113" cy="1205" r="21"></circle></clipPath>
      <g clip-path="url(#flag)">
        <rect x="91" y="1184" width="44" height="44" fill="#fff"></rect>
        <path fill="#000" d="M113 1184h12v7h-12zM101 1191h12v7h-12zM125 1191h12v7h-12zM89 1198h12v7h-12zM113 1198h12v7h-12zM101 1205h12v7h-12zM125 1205h12v7h-12zM89 1212h12v7h-12zM113 1212h12v7h-12zM101 1219h12v8h-12zM125 1219h12v8h-12z"></path>
      </g>
    </svg>`;
  }
}

@customElement("stat-value")
class StatValue extends LitElement {
  static styles = css`
    :host { display: block; padding-left: 12px; font: italic 900 172px/172px Roboto, "Liberation Sans", sans-serif; color: #fff; text-align: center; white-space: nowrap; }
    .small { font-size: 102px; line-height: 102px; }
    .tiny { font-size: 76px; line-height: 76px; }
  `;
  @property() whole = "";
  @property() fraction = "";
  @property() size = "small";
  render() {
    return html`${this.whole}${this.fraction ? html`<span class=${this.size}>${this.fraction}</span>` : ""}`;
  }
}

@customElement("app-root")
class AppRoot extends LitElement {
  static styles = css`
    :host { display: block; background: #000; color: #fff; font-family: Inter, "Liberation Sans", sans-serif; }
    .screen { display: flex; flex-direction: column; height: 100vh; }
    .status { display: flex; align-items: center; justify-content: space-between; height: 132px; padding: 4px 65px 0 82px; box-sizing: border-box; }
    .clock, .signals { display: flex; align-items: center; }
    .clock { gap: 10px; font-size: 48px; font-weight: 500; line-height: 60px; }
    .signals { gap: 18px; }
    .nav { display: grid; grid-template-columns: 150px 1fr 150px; align-items: center; height: 132px; }
    .back { display: flex; align-items: center; height: 132px; padding: 10px 0 0 57px; border: 0; background: none; }
    .title { margin: 0; font-size: 50px; font-weight: 600; line-height: 60px; text-align: center; }
    .content { flex: 1; min-height: 0; overflow-y: auto; scrollbar-width: none; }
    .mapbox { position: relative; }
    .expand { position: absolute; top: 45px; right: 45px; width: 135px; height: 135px; padding: 0; border: 0; background: #f0f0f0; box-shadow: 0 0 45px rgba(0, 0, 0, 0.2); }
    .legal { position: absolute; left: 33px; bottom: 26px; font-size: 29px; font-weight: 500; line-height: 32px; color: rgba(70, 66, 60, 0.75); text-underline-offset: 5px; }
    .trip { position: absolute; left: 60px; right: 60px; bottom: 75px; display: flex; }
    .info { flex: 1; padding: 13px 16px; background: rgba(255, 255, 255, 0.9); color: #000; }
    .name { margin: 0 0 6px; font: 700 39px/65px "Liberation Sans", sans-serif; }
    .facts { display: grid; margin: 0; font: 300 42px/65px Roboto, sans-serif; }
    .fact { display: flex; gap: 32px; }
    .fact dd { margin: 0; color: #00bdf2; }
    .distance { position: relative; display: flex; flex-direction: column; align-items: center; gap: 8px; width: 301px; height: 301px; padding-top: 34px; box-sizing: border-box; background: #03aff3; }
    .distance::before { content: ""; position: absolute; left: -37px; top: 113px; border: solid transparent; border-width: 37px 37px 37px 0; border-right-color: #03aff3; }
    .narrow { font-family: "Roboto Condensed", "Liberation Sans", sans-serif; font-style: italic; }
    .km { font-size: 60px; line-height: 60px; font-weight: 900; }
    .grid { display: grid; grid-template-columns: 1fr 1fr; gap: 12px; padding-top: 15px; }
    .tile { position: relative; display: flex; flex-direction: column; align-items: center; aspect-ratio: 1; padding-top: 70px; box-sizing: border-box; background: #262626; }
    .head { margin: 0; font-size: 60px; line-height: 60px; font-weight: 900; }
    .time { gap: 168px; }
    .score { gap: 126px; }
    .clockwrap { display: grid; gap: 26px; }
    .units { display: grid; grid-template-columns: 1fr 1fr; justify-self: center; width: 492px; font-size: 54px; line-height: 54px; text-align: center; }
    .speed { padding-top: 175px; }
    .gauge { position: absolute; inset: 0; width: 100%; height: 100%; }
    .avg { margin-top: 59px; font-size: 42px; line-height: 42px; }
    .accent { margin: 13px 0 9px; font-size: 55px; line-height: 55px; font-weight: 900; color: #00bdf7; }
    .rate { font-size: 48px; line-height: 48px; }
    .home { position: fixed; left: 50%; bottom: 24px; width: 444px; height: 15px; margin-left: -222px; border-radius: 8px; background: #fff; }
  `;

  render() {
    return html`<div class="screen">
      <header>
        <div class="status">
          <div class="clock"><span>09:30</span>
            <svg width="34" height="34" viewBox="0 0 34 34" fill="none" stroke="#fff" stroke-width="3" stroke-linejoin="round"><path d="M32 3L4 15Q2 17 4 17L17 18L18 31Q20 33 21 30Z"></path></svg>
          </div>
          <div class="signals">
            <svg width="55" height="36" viewBox="0 0 55 36" fill="#fff"><rect y="22" width="10" height="13" rx="3"></rect><rect x="15" y="16" width="10" height="19" rx="3"></rect><rect x="30" y="8" width="10" height="27" rx="3"></rect><rect x="45" y="0" width="10" height="35" rx="3" fill="#333"></rect></svg>
            <svg width="50" height="36" viewBox="0 0 50 36"><g fill="none" stroke="#fff" stroke-width="8"><path d="M3 14A31 31 0 0 1 47 14"></path><path d="M12 23A18 18 0 0 1 38 23"></path></g><path d="M25 36L18 29A11 11 0 0 1 32 29Z" fill="#fff"></path></svg>
            <svg width="79" height="38" viewBox="0 0 79 38"><rect x="2" y="2" width="68" height="34" rx="9" fill="none" stroke="#6b6b6b" stroke-width="3"></rect><path d="M75 13Q79 14 79 19Q79 24 75 25Z" fill="#6b6b6b"></path><rect x="6" y="6" width="60" height="26" rx="4" fill="#4cd964"></rect><path d="M40 3L26 22H34L31 35L47 15H39L41 3Z" fill="#fff" stroke="#000" stroke-width="7" paint-order="stroke"></path></svg>
          </div>
        </div>
        <nav class="nav">
          <button class="back" aria-label="Zurück"><svg width="34" height="52" viewBox="0 0 34 52" fill="#fff"><path d="M25 0L34 9L17 26L34 43L25 52L0 26Z"></path></svg></button>
          <h1 class="title">Statistik</h1>
        </nav>
      </header>
      <main class="content">
        <section class="mapbox">
          <route-map></route-map>
          <a class="legal" href="#legal">Rechtl. Informationen</a>
          <button class="expand" aria-label="Karte vergrößern"><svg width="135" height="135" viewBox="0 0 135 135" fill="none" stroke="#000" stroke-width="6" stroke-linecap="round" stroke-linejoin="round"><path d="M74 60L104 30M85 30H104V49M61 72L30 103M30 84V103H49"></path></svg></button>
          <div class="trip">
            <div class="info">
              <h2 class="name">Michendorf - Flieden</h2>
              <dl class="facts">
                <div class="fact"><dt>Datum:</dt><dd>22. Februar 2019</dd></div>
                <div class="fact"><dt>Zeit:</dt><dd>15:35 - 08:49 Uhr</dd></div>
                <div class="fact"><dt>Gesamtzeit:</dt><dd>17:13:45 h</dd></div>
              </dl>
            </div>
            <div class="distance">
              <stat-value whole="0" fraction=".0" size="tiny"></stat-value>
              <span class="narrow km">km</span>
            </div>
          </div>
        </section>
        <section class="grid">
          <article class="tile time">
            <h2 class="head narrow">FAHRZEIT</h2>
            <div class="clockwrap">
              <stat-value whole="02:52"></stat-value>
              <div class="units narrow"><span>h</span><span>min</span></div>
            </div>
          </article>
          <article class="tile speed">
            <svg class="gauge" viewBox="0 0 615 615" fill="none" stroke="#5c5c5c" stroke-width="16"><path d="M150 428A223 223 0 1 1 465 428"></path></svg>
            <stat-value whole="0" fraction=".0"></stat-value>
            <span class="avg narrow">durchschn.</span>
            <h2 class="accent narrow">GESCHWINDIGKEIT</h2>
            <span class="rate narrow">km/h</span>
          </article>
          <article class="tile score">
            <h2 class="head narrow">ROUGHNESS</h2>
            <stat-value whole="2" fraction=".6"></stat-value>
          </article>
          <article class="tile score">
            <h2 class="head narrow">FLOW</h2>
            <stat-value whole="8" fraction=".9"></stat-value>
          </article>
        </section>
      </main>
      <div class="home"></div>
    </div>`;
  }
}
